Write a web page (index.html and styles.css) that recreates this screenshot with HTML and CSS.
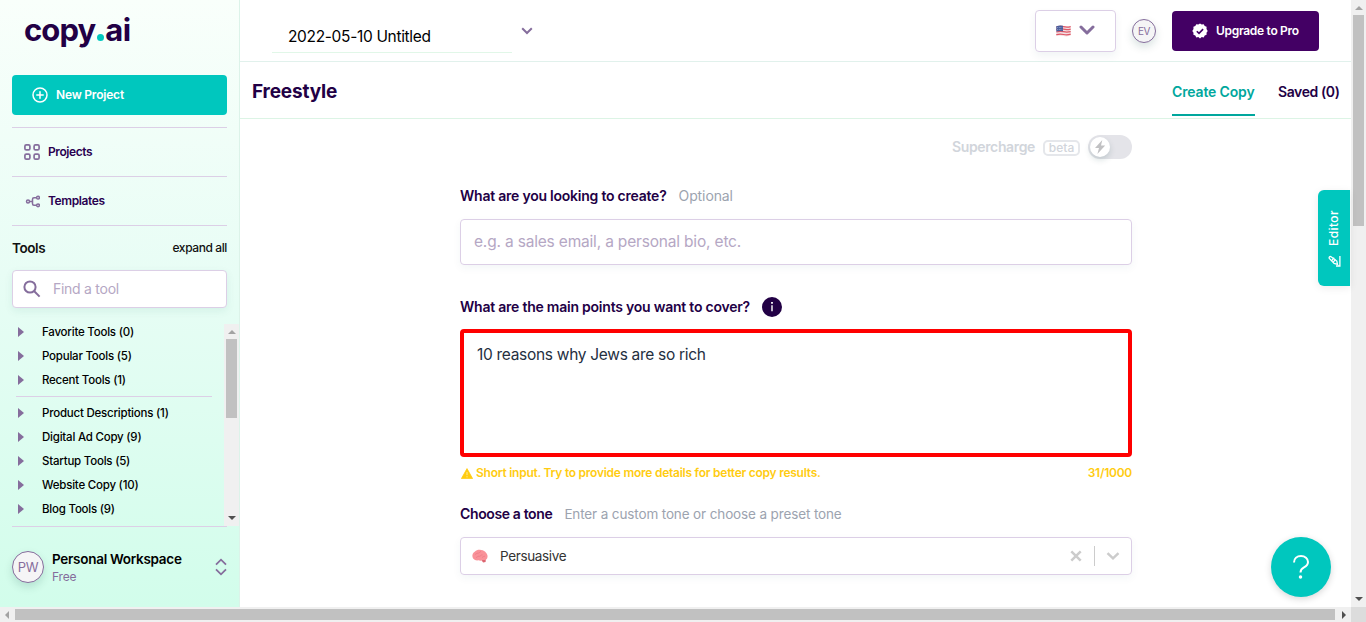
FILE: index.html
```html
<!DOCTYPE html>
<html lang="en">
<head>
<meta charset="utf-8">
<title>copy.ai</title>
<link rel="stylesheet" href="styles.css">
</head>
<body>
<div class="window">
  <aside class="sidebar">
    <div class="logo"><span class="logo-copy">copy</span><i class="logo-dot"></i><span class="logo-ai">ai</span></div>
    <button class="new-project">
      <svg width="16" height="16" viewBox="0 0 16 16" fill="none" stroke="#fff" stroke-width="1.5" stroke-linecap="round"><circle cx="8" cy="8" r="7"/><path d="M8 4.8v6.4M4.8 8h6.4"/></svg>
      <span class="t-new">New Project</span>
    </button>
    <nav class="nav">
      <a class="nav-item">
        <svg width="16" height="16" viewBox="0 0 16 16" fill="none" stroke="#856d9c" stroke-width="1.7"><rect x=".9" y=".9" width="5" height="5" rx="1.4"/><rect x="10.100" y=".9" width="5" height="5" rx="1.4"/><rect x=".9" y="10.100" width="5" height="5" rx="1.4"/><rect x="10.100" y="10.100" width="5" height="5" rx="1.4"/></svg>
        <span class="t-projects">Projects</span>
      </a>
      <a class="nav-item">
        <svg width="16" height="16" viewBox="0 0 16 16" fill="none" stroke="#856d9c" stroke-width="1.5"><circle cx="4" cy="8.5" r="1.5"/><circle cx="14" cy="4.7" r="1.4"/><circle cx="14" cy="12.3" r="1.4"/><path d="M5.5 8.5h3M12.6 4.7H10a1.5 1.5 0 0 0-1.5 1.5v4.6a1.5 1.5 0 0 0 1.5 1.5h2.6"/></svg>
        <span class="t-templates">Templates</span>
      </a>
    </nav>
    <div class="tools-head"><span class="tools-title">Tools</span><span class="expand">expand all</span></div>
    <div class="search">
      <svg width="18" height="18" viewBox="0 0 18 18" fill="none" stroke="#856d9c" stroke-width="2"><circle cx="7" cy="7" r="5.6"/><path d="M11 11l5.6 5.6"/></svg>
      <span>Find a tool</span>
    </div>
    <div class="tool-panel">
      <div class="tool-list">
        <div class="tool"><i class="tri"></i><span>Favorite Tools (0)</span></div>
        <div class="tool"><i class="tri"></i><span>Popular Tools (5)</span></div>
        <div class="tool"><i class="tri"></i><span>Recent Tools (1)</span></div>
        <hr class="rule">
        <div class="tool"><i class="tri"></i><span>Product Descriptions (1)</span></div>
        <div class="tool"><i class="tri"></i><span>Digital Ad Copy (9)</span></div>
        <div class="tool"><i class="tri"></i><span>Startup Tools (5)</span></div>
        <div class="tool"><i class="tri"></i><span>Website Copy (10)</span></div>
        <div class="tool"><i class="tri"></i><span>Blog Tools (9)</span></div>
      </div>
      <div class="vbar list-bar"><i class="up"></i><i class="thumb"></i><i class="down"></i></div>
    </div>
    <div class="workspace">
      <span class="avatar avatar-lg">PW</span>
      <div class="ws-text"><b>Personal Workspace</b><span>Free</span></div>
      <svg width="12" height="18" viewBox="0 0 12 18" fill="none" stroke="#856d9c" stroke-width="1.8"><path d="M1 6.6l5-4.9 5 4.9M1 11.4l5 4.900 5-4.900"/></svg>
    </div>
  </aside>

  <main class="main">
    <header class="topbar">
      <div class="doc-name"><span>2022-05-10 Untitled</span></div>
      <svg class="doc-caret" width="12" height="8" viewBox="0 0 12 8" fill="none" stroke="#856d9c" stroke-width="2"><path d="M1.2 1.3L6 6l4.800-4.700"/></svg>
      <div class="lang">
        <svg width="15" height="12" viewBox="0 0 15 12"><path d="M.3 1.2Q4 0 7.500.9T14.700.8V10.600Q11 12 7.500 11T.3 11z" fill="#f3dfe2"/><path d="M.3 2Q4 .8 7.500 1.700T14.700 1.600M.3 4.500Q4 3.300 7.500 4.200T14.700 4.100M.3 7Q4 5.900 7.500 6.700T14.700 6.600M.3 9.700Q4 8.600 7.500 9.500T14.700 9.200" fill="none" stroke="#df5766" stroke-width="1.25"/><path d="M.3 1.200Q4 0 7 .8V6.300Q4 5.400.3 6.500z" fill="#4b5e9c"/><path d="M1.300 2.500h5M1.300 4.500h5" stroke="#b5bfdf" stroke-width=".7" stroke-dasharray=".8 .8"/></svg>
        <svg width="16" height="11" viewBox="0 0 16 11" fill="none" stroke="#856d9c" stroke-width="3" stroke-linecap="round" stroke-linejoin="round"><path d="M2 2l6 6 6-6"/></svg>
      </div>
      <span class="avatar avatar-sm">EV</span>
      <button class="upgrade">
        <svg width="16" height="16" viewBox="0 0 16 16"><path fill="#fff" d="M8 .4l1.700 1.100 2-.3 1 1.800 1.900.8-.1 2.100L15.700 8l-1.200 1.700.1 2.100-1.900.8-1 1.800-2-.3L8 15.600l-1.700-1.500-2 .3-1-1.800-1.900-.8.1-2.100L.3 8l1.200-2.100-.1-2.100 1.900-.8 1-1.800 2 .3z"/><path d="M4.800 8.200l2.200 2.200 4.100-4.300" fill="none" stroke="#430064" stroke-width="1.600"/></svg>
        <span>Upgrade to Pro</span>
      </button>
    </header>
    <div class="subbar">
      <h1>Freestyle</h1>
      <div class="tabs"><span class="tab active">Create Copy</span><span class="tab saved">Saved (0)</span></div>
    </div>
    <section class="form">
      <div class="super"><span class="t-super">Supercharge</span><span class="beta">beta</span>
        <div class="toggle"><span class="knob"><svg width="12" height="14" viewBox="0 0 12 14"><path d="M8.300 0L1 8h4L3.400 14 11.200 5.600H7z" fill="#c1c1c3"/></svg></span></div>
      </div>
      <div class="label l1"><b>What are you looking to create?</b><span class="optional">Optional</span></div>
      <div class="input"><span>e.g. a sales email, a personal bio, etc.</span></div>
      <div class="label l2"><b>What are the main points you want to cover?</b><svg width="20" height="20" viewBox="0 0 20 20"><circle cx="10" cy="10" r="10" fill="#220045"/><path d="M9.100 5h1.800v1.800H9.100zM9.300 8.200h1.400v6H9.300z" fill="#fff"/></svg></div>
      <div class="textarea"><span>10 reasons why Jews are so rich</span></div>
      <div class="hint">
        <svg width="12" height="11" viewBox="0 0 12 11"><path d="M6 .6L11.600 10.600H.4z" fill="#fc1" stroke="#fc1" stroke-width=".8" stroke-linejoin="round"/><path d="M6 4v3.200M6 8.200v1.200" stroke="#fff3c0" stroke-width=".8"/></svg>
        <span class="t-hint">Short input. Try to provide more details for better copy results.</span><span class="count">31/1000</span>
      </div>
      <div class="label l3"><b>Choose a tone</b><span class="tone-note">Enter a custom tone or choose a preset tone</span></div>
      <div class="select">
        <svg width="16" height="14" viewBox="0 0 16 14"><path d="M11 9.500l2.800.8-.2 2.700-2.500.4-1.500-2z" fill="#dc6570"/><path d="M.5 8C0 5.500 1 3.300 3 2.400 4.500.8 7 .3 9 .9c2.500.1 4.200 1.400 5 2.900 1.600 1.500 2 3.800 1.200 5.400-.8 1.700-2.600 2.200-4.200 1.700-1.500 1-3.200 1-4.500.4C3.800 11.700 1 10.500.5 8z" fill="#f99299"/><path d="M3 5.500c1-.2 1.500-1.500 3-1.300s1.300-1.800 3-1.500M4 8.500c1.200.2 1.500-1.600 3-1.200s2.200-1.800 3.500-1.400M10 8.500c1-.2 1.500-1.500 3-1.200" fill="none" stroke="#e8737f" stroke-width=".6"/></svg>
        <span class="t-tone">Persuasive</span>
        <svg class="clear" width="12" height="12" viewBox="0 0 12 12" stroke="#ccc" stroke-width="2.500"><path d="M1.300 1.300l9.400 9.400M10.700 1.300l-9.400 9.400"/></svg>
        <i class="sep"></i>
        <svg width="14" height="8" viewBox="0 0 14 8" fill="none" stroke="#ccc" stroke-width="2.500"><path d="M1.500 1.200L7 6.300l5.500-5.100"/></svg>
      </div>
    </section>
    <div class="editor-tab">
      <span>Editor</span>
      <svg width="13" height="12" viewBox="0 0 13 12" fill="none" stroke="#fff" stroke-width="1.300"><path d="M1.500 3.600C.6 2.400 1.800 1 3.100 1.700L8.800 6l.7 3.300-3.400-.8zM3.800 5.600l2.300-3M5.500 6.800l2-2.600M11.900 1v10H8"/></svg>
    </div>
    <div class="help"><svg width="18" height="26" viewBox="0 0 18 26" fill="none" stroke="#fff" stroke-width="2"><path d="M2 8.500C2 4.500 5 2 9 2s7 2.600 7 6c0 3-2 4.300-4 5.400-2 1.100-3.500 2-3.500 5"/><circle cx="8.500" cy="23" r="1" fill="#fff" stroke-width="1.500"/></svg></div>
  </main>
  <div class="vbar page-v"><i class="up"></i><i class="thumb"></i><i class="down"></i></div>
  <div class="hbar"><i class="left"></i><i class="thumb"></i><i class="right"></i></div>
  <div class="corner"></div>
</div>
</body>
</html>
```
FILE: styles.css
```css
* { box-sizing: border-box; }
body { margin: 0; font: 500 12px/16px Inter, "Liberation Sans", sans-serif; color: #111; background: #fff; }
button { border: 0; font: inherit; text-align: left; }
svg, i { display: block; flex: none; }
span, b { white-space: nowrap; }
.window { width: 1366px; height: 622px; display: grid; grid-template: 607px 15px / 240px 1111px 15px; overflow: hidden; }

/* Sidebar */
.sidebar { background: linear-gradient(#f9fffb, #e8fdf5 45%, #d2fdeb); border-right: 1px solid #dcf3e9; padding: 0 12px; display: flex; flex-direction: column; min-width: 0; }
.logo { height: 75px; padding: 10px 0 0 12px; display: flex; align-items: flex-start; color: #220045; font: 700 31px/39px Inter, sans-serif; }
.logo-copy { letter-spacing: -.9px; }
.logo-dot { width: 7px; height: 7px; border-radius: 50%; background: #00c7be; margin: 24px 1px 0 2px; }
.logo-ai { letter-spacing: -.6px; }
.new-project { height: 40px; border-radius: 4px; background: #00c7be; color: #fff; display: flex; align-items: center; gap: 8px; padding: 0 20px; margin-bottom: 12px; font-weight: 600; letter-spacing: -.2px; }
.nav-item { height: 49px; border-top: 1px solid #dccfe6; display: flex; align-items: center; gap: 8px; padding-left: 12px; color: #290050; font-weight: 600; letter-spacing: -.4px; }
.nav-item:last-child { height: 50px; border-bottom: 1px solid #dccfe6; }
.tools-head { display: flex; justify-content: space-between; align-items: center; height: 44px; }
.tools-title { font-size: 13.5px; font-weight: 600; letter-spacing: -.4px; }
.expand { letter-spacing: -.4px; }
.search { height: 38px; background: #fff; border: 1px solid #dccfe6; border-radius: 4px; box-shadow: 0 3px 8px rgba(0,100,90,.08); display: flex; align-items: center; gap: 12px; padding-left: 10px; color: #b5a7c4; font-size: 14px; font-weight: 400; letter-spacing: -.27px; }
.tool-panel { height: 218px; display: flex; margin: 0 -12px 0 0; padding-top: 12px; }
.tool-list { width: 212px; padding-left: 4px; }
.tool { height: 24px; display: flex; align-items: center; gap: 18px; padding-left: 2px; font-size: 11.5px; letter-spacing: -.22px; color: #000; }
.tri { border-left: 6px solid #856d9c; border-top: 5px solid transparent; border-bottom: 5px solid transparent; height: 10px; }
.rule { border: 0; height: 1px; background: #dccfe6; margin: 4px 12px 4px 0; }
.vbar { background: #f0f0f0; width: 15px; display: flex; flex-direction: column; align-items: center; }
.vbar .thumb { width: 11px; background: #c1c1c1; }
.up { border: 4px solid transparent; border-top: 0; border-bottom-color: #a3a3a3; margin: 6px 0 5px; }
.down { border: 4px solid transparent; border-bottom: 0; border-top-color: #505050; margin: auto 0 6px; }
.list-bar { margin-top: 4px; height: 202px; }
.list-bar .thumb { height: 79px; }
.workspace { border-top: 1px solid #dccfe6; display: flex; align-items: center; height: 81px; }
.avatar { border: 1px solid #856d9c; border-radius: 50%; background: #f5f5f6; color: #856d9c; display: flex; align-items: center; justify-content: center; box-shadow: 0 4px 8px rgba(0,70,60,.15); font-weight: 400; flex: none; }
.avatar-lg { width: 32px; height: 32px; font-size: 13px; letter-spacing: -.4px; }
.avatar-sm { width: 24px; height: 24px; font-size: 10px; letter-spacing: -.5px; margin-left: 16px; }
.ws-text { margin-left: 8px; width: 164px; display: flex; flex-direction: column; padding-top: 1px; }
.ws-text b { font-size: 13.5px; line-height: 18px; font-weight: 600; letter-spacing: -.28px; color: #000; }
.ws-text span { color: #856d9c; line-height: 18px; font-weight: 400; letter-spacing: -.2px; }

/* Header */
.main { position: relative; min-width: 0; }
.topbar { height: 62px; border-bottom: 1px solid #e1f1ec; display: flex; align-items: center; padding-left: 32px; }
.doc-name { width: 240px; height: 34px; border-bottom: 1px solid #e1f7e8; padding: 9px 16px 0; font-size: 15.5px; font-weight: 400; margin-top: 11px; line-height: 17px; letter-spacing: -.33px; color: #000; }
.doc-caret { margin: 0 502px 0 9px; }
.lang { width: 81px; height: 42px; border: 1px solid #dccfe6; border-radius: 4px; box-shadow: 0 4px 8px rgba(0,70,90,.06); display: flex; align-items: center; gap: 8px; padding-left: 20px; }
.upgrade { width: 147px; height: 40px; margin-left: 16px; background: #430064; color: #fff; border-radius: 4px; display: flex; align-items: center; gap: 8px; padding: 0 20px; font-weight: 600; letter-spacing: -.3px; }
.subbar { height: 57px; border-bottom: 1px solid #dcf4e5; display: flex; justify-content: space-between; padding: 0 12px; }
h1 { margin: 0; font: 700 19px/59px Inter, sans-serif; letter-spacing: -.17px; color: #220045; }
.tabs { display: flex; gap: 23px; font: 600 14px/59px Inter, sans-serif; color: #220045; }
.tab { height: 54px; }
.active { color: #00a79d; border-bottom: 2px solid #00a79d; width: 83px; letter-spacing: -.15px; }
.saved { width: 61px; letter-spacing: -.4px; }

/* Form */
.form { width: 672px; margin-left: 220px; padding-top: 16px; font-size: 14px; }
.super { height: 24px; display: flex; justify-content: flex-end; align-items: center; color: #d1d5db; font-weight: 600; }
.t-super { letter-spacing: -.36px; }
.beta { margin: 1px 8px 0; border: 2px solid #e5e7eb; border-radius: 5px; height: 16px; width: 37px; font-size: 12px; line-height: 12px; font-weight: 500; text-align: center; }
.toggle { width: 44px; height: 24px; background: #e4e4e9; border-radius: 12px; padding: 2px; }
.knob { width: 20px; height: 20px; border-radius: 50%; background: #fff; display: flex; align-items: center; justify-content: center; box-shadow: 0 3px 6px rgba(0,60,60,.16); }
.label { display: flex; align-items: center; height: 20px; gap: 12px; color: #9ca3af; }
.label b { font-weight: 600; color: #220045; letter-spacing: -.23px; }
.label span { font-weight: 400; }
.optional { letter-spacing: -.1px; }
.l1 { margin-top: 27px; }
.input { margin-top: 13px; height: 46px; border: 1px solid #dccfe6; border-radius: 4px; box-shadow: 0 3px 8px rgba(0,70,90,.05); font: 400 15.5px/43px Inter, sans-serif; letter-spacing: -.18px; color: #b5a7c4; padding-left: 13px; }
.l2 { margin-top: 32px; }
.textarea { margin-top: 12px; height: 128px; border: 4px solid #f00; border-radius: 4px; font: 400 15.5px/19px Inter, sans-serif; letter-spacing: -.3px; color: #252f3f; padding: 12px 13px; }
.hint { display: flex; align-items: center; height: 16px; margin-top: 8px; color: #fc1; font-size: 12px; font-weight: 600; padding-left: 1px; gap: 3px; letter-spacing: -.25px; }
.count { margin-left: auto; }
.l3 { margin-top: 23px; }
.l3 b { letter-spacing: -.37px; }
.tone-note { font-size: 13.5px; letter-spacing: -.13px; }
.select { margin-top: 13px; height: 38px; border: 1px solid #dccfe6; border-radius: 4px; box-shadow: 0 3px 8px rgba(0,70,90,.05); display: flex; align-items: center; padding: 0 11px; color: #333; font-weight: 400; }
.t-tone { margin-left: 12px; font-size: 13.5px; letter-spacing: -.35px; }
.clear { margin-left: auto; }
.sep { width: 1px; height: 20px; background: #ccc; margin: 0 11px 0 12px; }

/* Floating controls */
.editor-tab { position: absolute; right: 1px; top: 190px; width: 32px; height: 96px; background: #00c7be; color: #fff; border-radius: 6px 0 0 6px; box-shadow: 0 2px 8px rgba(0,0,0,.08); display: flex; flex-direction: column; align-items: center; padding-top: 20px; gap: 9px; }
.editor-tab span { writing-mode: vertical-rl; transform: rotate(180deg); height: 36px; letter-spacing: .4px; }
.help { position: absolute; right: 20px; top: 537px; width: 60px; height: 60px; border-radius: 50%; background: #00c7be; box-shadow: 0 2px 7px rgba(0,0,0,.16); display: flex; align-items: center; justify-content: center; }

/* Scrollbars */
.page-v .thumb { height: 211px; }
.hbar { grid-column: 1 / 3; background: #f0f0f0; display: flex; align-items: center; }
.hbar .thumb { height: 11px; width: 1320px; background: #c1c1c1; }
.left { border: 4px solid transparent; border-left: 0; border-right-color: #a3a3a3; margin: 0 6px 0 5px; }
.right { border: 4px solid transparent; border-right: 0; border-left-color: #505050; margin-left: 7px; }
.corner { background: #dcdcdc; }
```
